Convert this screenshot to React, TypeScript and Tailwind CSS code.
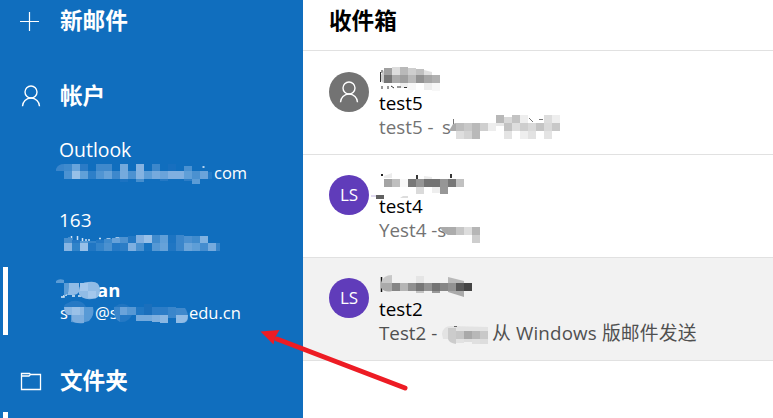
import type { ReactNode } from "react";

type Cell = [x: number, y: number, w: number, h: number, fill: string];

/* Pixelated patches that hide private details; coordinates are page pixels. */
const outlookCells: Cell[] = [
  [64, 164, 8, 7, "#3f8acd"], [72, 164, 8, 7, "#68a4db"], [80, 164, 8, 7, "#2b7bc6"],
  [96, 164, 16, 7, "#3f89cc"], [120, 164, 8, 7, "#73a9dc"], [136, 164, 8, 7, "#86b3e1"],
  [152, 164, 8, 7, "#3c87cb"], [168, 164, 8, 7, "#176fbf"], [184, 166, 8, 5, "#4a91d1"],
  [64, 171, 8, 8, "#4b92d2"], [72, 171, 8, 8, "#97c0e8"], [80, 171, 8, 8, "#60a0d8"],
  [88, 171, 8, 8, "#2d7fc8"], [96, 171, 8, 8, "#5095d3"], [104, 171, 8, 8, "#66a2d9"],
  [112, 171, 8, 8, "#3d88cc"], [120, 171, 8, 8, "#75aadd"], [128, 171, 8, 8, "#4c92d1"],
  [136, 171, 8, 8, "#84b3e1"], [144, 171, 8, 8, "#5c9dd7"], [152, 171, 8, 8, "#76aadd"],
  [160, 171, 8, 8, "#6aa3da"], [168, 171, 16, 8, "#80afe0"], [184, 171, 8, 8, "#609fd8"],
  [192, 171, 8, 8, "#4b91d0"], [200, 171, 8, 8, "#6ba4da"], [208, 172, 4, 7, "#2379c5"],
  [120, 179, 8, 3, "#1b72c1"], [136, 179, 8, 3, "#458ece"], [160, 179, 8, 2, "#2478c4"],
  [184, 179, 8, 2, "#2c7dc7"], [192, 179, 8, 5, "#5c9cd6"],
];
const netCells: Cell[] = [
  [64, 238, 8, 5, "#488fcf"], [72, 240, 8, 3, "#2578c5"], [80, 241, 8, 2, "#5a9cd6"],
  [88, 241, 8, 2, "#3484ca"], [96, 240, 8, 3, "#2478c4"], [104, 239, 8, 4, "#408bcd"],
  [112, 238, 8, 5, "#66a1d9"], [120, 237, 8, 6, "#4d92d1"], [128, 236, 8, 7, "#2378c4"],
  [136, 235, 8, 8, "#80afe0"], [144, 235, 8, 8, "#98c0e8"], [152, 235, 8, 8, "#408bcd"],
  [160, 235, 8, 8, "#609fd8"], [168, 235, 8, 8, "#1c74c2"], [176, 235, 8, 8, "#3b86cb"],
  [184, 236, 8, 7, "#4c91d1"], [192, 236, 8, 7, "#408bcd"], [200, 236, 8, 7, "#80b2e1"],
  [64, 243, 8, 8, "#87b5e3"], [72, 243, 8, 8, "#3083c9"], [80, 243, 8, 8, "#98c0e8"],
  [88, 243, 8, 8, "#2076c3"], [96, 243, 8, 8, "#3484ca"], [104, 243, 8, 8, "#4b91d0"],
  [112, 243, 8, 8, "#2579c5"], [120, 243, 8, 8, "#2b7dc6"], [128, 243, 8, 8, "#7eafe0"],
  [136, 243, 8, 8, "#4a91d0"], [144, 243, 8, 8, "#1773c1"], [152, 243, 8, 8, "#5598d4"],
  [160, 243, 8, 8, "#66a2d9"], [168, 243, 8, 8, "#2076c3"], [176, 243, 8, 8, "#3b86cb"],
  [184, 243, 8, 8, "#6ca5da"], [192, 243, 8, 8, "#5e9ed7"], [200, 243, 8, 8, "#458dcf"],
  [208, 243, 8, 8, "#75aadd"], [216, 243, 4, 8, "#3584ca"],
];
const schoolCells: Cell[] = [
  [120, 307, 7, 8, "#6aa3da"], [127, 307, 9, 8, "#5698d4"], [136, 307, 8, 8, "#2077c3"],
  [144, 304, 8, 11, "#1a6fbc"], [152, 307, 16, 8, "#2d7dc7"], [168, 307, 8, 8, "#3a86cb"],
  [176, 308, 8, 7, "#4089cc"], [136, 315, 16, 6, "#74aadd"], [152, 315, 8, 7, "#80b0df"],
  [160, 315, 8, 8, "#8ab7e3"], [168, 315, 8, 3, "#3b87cc"],
];
const test5Cells: Cell[] = [
  [384, 68, 8, 7, "#a0a0a0"], [392, 67, 8, 8, "#dddddd"], [400, 67, 8, 8, "#b9b9b9"],
  [408, 68, 8, 7, "#cecece"], [416, 69, 8, 6, "#c0c0c0"],
  [384, 75, 8, 8, "#777777"], [392, 75, 8, 8, "#ababab"], [400, 75, 8, 8, "#9f9f9f"],
  [408, 75, 8, 8, "#b9b9b9"], [416, 75, 8, 8, "#929292"], [424, 75, 8, 8, "#a6a6a6"],
  [432, 75, 8, 8, "#b0b0b0"], [400, 83, 8, 5, "#eeeeee"], [408, 83, 8, 7, "#f7f7f7"],
  [424, 83, 8, 7, "#ededed"], [432, 83, 8, 8, "#f7f7f7"],
  [456, 123, 8, 8, "#bdbdbd"], [464, 123, 8, 8, "#c8c8c8"], [472, 123, 8, 8, "#b9b9b9"],
  [480, 123, 8, 8, "#cfcfcf"], [488, 123, 8, 8, "#ededed"],
  [456, 131, 8, 8, "#dedede"], [464, 131, 8, 8, "#d3d3d3"], [472, 131, 8, 8, "#b9b9b9"],
  [496, 115, 8, 8, "#b8b8b8"], [504, 117, 8, 6, "#d8d8d8"], [512, 115, 8, 8, "#c3c3c3"],
  [520, 115, 8, 8, "#eeeeee"], [496, 123, 8, 3, "#e8e8e8"], [504, 123, 8, 8, "#c2c2c2"],
  [512, 123, 8, 8, "#dddddd"], [520, 123, 8, 8, "#cecece"], [528, 123, 8, 8, "#d9d9d9"],
  [536, 123, 8, 8, "#c4c4c4"], [544, 115, 8, 8, "#dddddd"], [552, 115, 8, 8, "#eeeeee"],
  [544, 123, 8, 8, "#d9d9d9"], [552, 123, 8, 8, "#c8c8c8"], [504, 131, 8, 8, "#e4e4e4"],
  [520, 131, 8, 8, "#eeeeee"], [528, 131, 8, 8, "#e2e2e2"], [544, 131, 8, 8, "#e4e4e4"],
];
const test4Cells: Cell[] = [
  [384, 179, 8, 8, "#a4a4a4"], [392, 179, 8, 8, "#bfbfbf"], [400, 179, 8, 8, "#f8f8f8"],
  [408, 179, 8, 8, "#787878"], [416, 179, 8, 8, "#959595"], [424, 179, 16, 8, "#737373"],
  [440, 179, 8, 8, "#969696"], [448, 179, 8, 8, "#777777"], [456, 179, 8, 8, "#c1c1c1"],
  [416, 187, 8, 7, "#dadada"], [432, 187, 8, 6, "#eeeeee"], [440, 187, 8, 7, "#979797"],
  [376, 195, 8, 4, "#616161"], [371, 195, 5, 2, "#dfd9ef"],
  [448, 227, 8, 8, "#acacac"], [456, 227, 8, 8, "#c6c6c6"], [464, 227, 8, 8, "#dddddd"],
  [472, 227, 8, 8, "#b6b6b6"], [472, 235, 8, 8, "#cecece"],
];
const test2Cells: Cell[] = [
  [392, 283, 8, 8, "#858585"], [400, 283, 8, 8, "#b5b5b5"], [408, 283, 8, 8, "#909090"],
  [416, 283, 8, 8, "#777777"], [424, 283, 8, 8, "#929292"], [432, 283, 8, 8, "#747474"],
  [440, 283, 8, 8, "#868686"], [448, 283, 8, 8, "#929292"], [456, 283, 8, 8, "#595959"],
  [464, 283, 8, 8, "#454545"], [416, 276, 8, 7, "#e5e5e5"], [416, 291, 8, 2, "#c3c3c3"],
  [432, 291, 8, 2, "#999999"],
  [456, 331, 8, 8, "#c6c6c6"], [464, 331, 8, 8, "#a9a9a9"], [472, 331, 8, 8, "#b8b8b8"],
  [480, 331, 8, 8, "#c9c9c9"], [456, 339, 8, 4, "#e2e2e2"], [472, 339, 8, 5, "#e0e0e0"],
  [480, 339, 8, 5, "#dddddd"], [464, 339, 8, 3, "#dedede"],
];

function Mosaic({ cells }: { cells: Cell[] }) {
  return (
    <g shapeRendering="crispEdges">
      {cells.map(([x, y, width, height, fill]) => (
        <rect key={`${x}-${y}`} x={x} y={y} width={width} height={height} fill={fill} />
      ))}
    </g>
  );
}

function Annotations() {
  return (
    <svg className="pointer-events-none absolute inset-0" width="773" height="418" viewBox="0 0 773 418" aria-hidden="true">
      <path d="M56 171v-2q2-5 8-5v7z" fill="#3985cb" />
      <Mosaic cells={outlookCells} />
      <path d="M202.500 167h2" stroke="#e8f2fb" strokeWidth="1.500" />

      <path d="M68 238.500h2M99 238.500h2M106.500 239h4M115.500 238h4" stroke="#cfe2f5" strokeWidth="1.500" />
      <path d="M71.500 236v4M77.500 236v4M82.500 238v3M86 239v2M89 239v2" stroke="#cfe2f5" strokeWidth="1.500" />
      <Mosaic cells={netCells} />

      <path d="M61 297h3v-2M66 296V285M72 296h3M78 296h3" stroke="#dcebf8" strokeWidth="1.500" fill="none" />
      <path d="M56 283v-2q3-3 8-1v3z" fill="#5b9cd6" />
      <path d="M64 283h5v8q-2 4-5 5z" fill="#5b9cd6" />
      <path d="M69 283h10v9q-2 3-6 3h-6q2-4 2-8z" fill="#8fbbe6" />
      <path d="M79 290q1-8 9-8 12-2 12 8 0 9-8 9-10 1-13-5z" fill="#91bce6" />
      <path d="M80 283h8v8h-8zM88 291h8v7h-8z" fill="#a3c7ec" />
      <path d="M68 303q4-3 10-2 6 1 8 6h-22q0-3 4-4z" fill="#2679c4" />
      <path d="M64 307h20v8H68q-4-2-4-8z" fill="#8ab7e3" />
      <path d="M72 307h8v8h-8z" fill="#9ac1e8" />
      <path d="M84 307h9q2 8-4 14-7 3-18 1v-7h13z" fill="#589ad6" />
      <path d="M72 315h12v8q-10 1-12-3z" fill="#7cadde" />

      <Mosaic cells={test5Cells} />
      <path d="M380.500 72v10M382 70v3M382 86v3M388 86v3M391 86l3 2M397 87h4M404 87.500h3" stroke="#333" strokeWidth="1" />
      <path d="M381 75l3-5v13q-3-1-3-4z" fill="#ccc" />
      <path d="M424 70l8 2v3h-8z" fill="#e0e0e0" />
      <path d="M449 131l4-7 3-1v8z" fill="#aaa" />
      <path d="M453.500 119v5" stroke="#777" />
      <path d="M529 118l4 4M539 119.500h4" stroke="#777" />

      <Mosaic cells={test4Cells} />
      <path d="M381 175h2M417 175v4M451 174v4" stroke="#222" strokeWidth="1.800" />
      <path d="M384 176l8-3v5h-8zM424 176l8 1v2h-8z" fill="#ececec" />
      <path d="M400 198l3-2h5v2z" fill="#ddd" />
      <path d="M440 227h8v8q-5-2-8-8z" fill="#aaa" />

      <path d="M381.500 277v15" stroke="#111" strokeWidth="1.500" />
      <path d="M381 283q2-8 11-8v8z" fill="#c8c8c8" />
      <path d="M381 283h11v8q-7 2-11-3z" fill="#aaa" />
      <path d="M448 277l16 4v2h-16z" fill="#b9b9b9" />
      <path d="M448 291h16v6l-16-5z" fill="#aaa" />
      <path d="M442 334q1-8 9-8l37 1v4h-32v8h-13z" fill="#e3e3e3" />
      <path d="M448 328h8v16q-7-1-8-5z" fill="#cccccc" />
      <Mosaic cells={test2Cells} />
      <path d="M454 326.500h3" stroke="#666" />

      <path d="M114 307h6v15q-7-3-6-15z" fill="#3b86cb" />
      <path d="M116 306q5-4 11-1l3 2h-16z" fill="#2075c1" />
      <path d="M120 315h12q-4 8-12 7z" fill="#2478c4" />
      <Mosaic cells={schoolCells} />
      <path d="M176 308h9q3 4 3 10 0 5-6 5h-6z" fill="#4089cc" />
      <path d="M176 315h12q0 8-6 8h-6z" fill="#91bce6" />

      <path d="M405 388L277 339" stroke="#ed1c24" strokeWidth="5" strokeLinecap="round" />
      <path d="M260.500 331.500L279.500 330 275 337.500 273.500 344.500z" fill="#ed1c24" />
    </svg>
  );
}

function PersonIcon({ className }: { className?: string }) {
  return (
    <svg className={className} width="20" height="22" viewBox="0 0 20 22" fill="none" stroke="currentColor" strokeWidth="1.400">
      <circle cx="10" cy="7" r="6" />
      <path d="M1.500 21.300a8.500 8.300 0 0 1 17 0" />
    </svg>
  );
}

function NavHeading({ icon, children }: { icon: ReactNode; children: ReactNode }) {
  return (
    <div className="flex h-9 items-center">
      <div className="flex w-[60px] items-center pl-5">{icon}</div>
      <h2 className="pb-0.5 font-['Noto_Sans_CJK_SC',sans-serif] text-[22.600px] leading-[34px] font-bold">{children}</h2>
    </div>
  );
}

function Avatar({ children, className }: { children: ReactNode; className: string }) {
  return (
    <div className={`flex size-10 shrink-0 items-center justify-center rounded-full text-white ${className}`}>
      {children}
    </div>
  );
}

function MailRow({ avatar, title, preview, className }: { avatar: ReactNode; title: string; preview: ReactNode; className: string }) {
  return (
    <article className={`flex h-[103px] border-b border-[#e1e1e1] pt-5 pl-[26px] ${className}`}>
      {avatar}
      <div className="ml-2.5 pt-[19px]">
        <h3 className="h-6 text-[18.800px] leading-[25px] text-black">{title}</h3>
        <p className="flex h-6 text-[18.800px] leading-[25px] whitespace-pre">{preview}</p>
      </div>
    </article>
  );
}

export default function App() {
  return (
    <main className="relative flex h-[418px] w-[773px] overflow-hidden bg-white font-['Open_Sans','Noto_Sans_CJK_SC',sans-serif]">
      <nav className="w-[303px] shrink-0 bg-[#106ebe] pt-[3px] text-white">
        <NavHeading
          icon={
            <svg width="19" height="19" viewBox="0 0 19 19" stroke="currentColor" strokeWidth="1.200">
              <path d="M9.500 0v19M0 9.500h19" />
            </svg>
          }
        >
          新邮件
        </NavHeading>
        <div className="pt-[39px]">
          <NavHeading icon={<PersonIcon className="ml-px" />}>帐户</NavHeading>
        </div>
        <section className="mt-6 h-[70px] pl-[59px]">
          <h3 className="h-6 text-[19.400px] leading-6">Outlook</h3>
          <p className="pl-[155px] text-[16.500px] leading-[22px]">com</p>
        </section>
        <section className="h-[59px] pl-[59px]">
          <h3 className="text-[19px] leading-6">163</h3>
        </section>
        <section className="flex h-[68px] pl-[3px]">
          <div className="h-[68px] w-[5px] bg-white" />
          <div className="pt-[11px] pl-[52px]">
            <h3 className="h-6 pl-[37px] text-[18.500px] leading-6 font-bold">an</h3>
            <p className="flex text-[16.500px] leading-[22px]">
              <span className="w-[35px]">s</span>
              <span className="w-[94px]">@s</span>
              <span>edu.cn</span>
            </p>
          </div>
        </section>
        <div className="pt-7">
          <NavHeading
            icon={
              <svg width="22" height="20" viewBox="0 0 22 20" fill="none" stroke="currentColor" strokeWidth="1.300">
                <path d="M1.500 2.500h8l1 1h10v15h-19zM2 5h7l1.500-1.500" />
              </svg>
            }
          >
            文件夹
          </NavHeading>
        </div>
        <div className="mt-[13px] ml-[3px] h-2 w-[5px] bg-white" />
      </nav>
      <section className="min-w-0 flex-1">
        <header className="h-[51px] border-b border-[#e1e1e1] pt-[3px] pl-[26px]">
          <h1 className="font-['Noto_Sans_CJK_SC',sans-serif] text-[22.600px] leading-[34px] font-bold text-black">收件箱</h1>
        </header>
        <div className="pt-px">
          <MailRow
            avatar={<Avatar className="bg-[#737373]"><PersonIcon /></Avatar>}
            title="test5"
            className="text-[#737373]"
            preview={
              <>
                <span className="w-[63px]">test5 -</span>
                <span>s</span>
              </>
            }
          />
          <MailRow
            avatar={<Avatar className="bg-[#603cba] text-[17px]">LS</Avatar>}
            title="test4"
            className="text-[#737373]"
            preview="Yest4 -s"
          />
          <MailRow
            avatar={<Avatar className="bg-[#603cba] text-[17px]">LS</Avatar>}
            title="test2"
            className="bg-[#f2f2f2] text-[#505050]"
            preview={
              <>
                <span className="w-[113px]">Test2 -</span>
                <span className="tracking-[0.150px]">从 Windows 版邮件发送</span>
              </>
            }
          />
        </div>
      </section>
      <Annotations />
    </main>
  );
}
